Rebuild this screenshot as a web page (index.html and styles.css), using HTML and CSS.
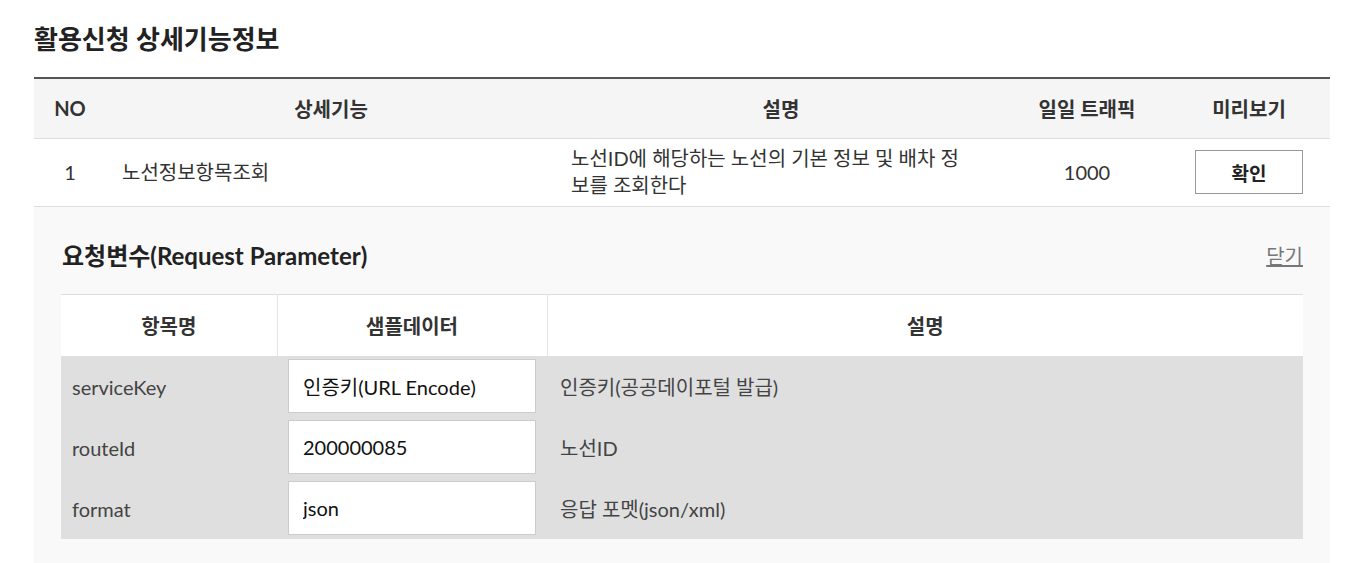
FILE: index.html
```html
<!DOCTYPE html>
<html lang="ko">
<head>
<meta charset="utf-8">
<link rel="stylesheet" href="styles.css">
</head>
<body>
<div class="page">
  <h2 class="title">활용신청 상세기능정보</h2>
  <table class="main">
    <colgroup>
      <col class="c-no"><col class="c-func"><col class="c-desc"><col class="c-traffic"><col class="c-preview">
    </colgroup>
    <thead>
      <tr><th>NO</th><th>상세기능</th><th>설명</th><th>일일 트래픽</th><th>미리보기</th></tr>
    </thead>
    <tbody>
      <tr class="row">
        <td class="center">1</td>
        <td class="left">노선정보항목조회</td>
        <td class="left desc"><div class="desc-text">노선ID에 해당하는 노선의 기본 정보 및 배차 정보를 조회한다</div></td>
        <td class="center">1000</td>
        <td class="center"><button class="btn">확인</button></td>
      </tr>
      <tr class="detail-row">
        <td colspan="5" class="detail">
          <div class="detail-head">
            <h3 class="sub-title">요청변수(Request Parameter)</h3>
            <a class="close" href="#">닫기</a>
          </div>
          <table class="params">
            <colgroup><col class="p-name"><col class="p-sample"><col class="p-desc"></colgroup>
            <thead><tr><th>항목명</th><th>샘플데이터</th><th>설명</th></tr></thead>
            <tbody>
              <tr><td class="pname">serviceKey</td><td class="psample"><input class="inp" type="text" value="인증키(URL Encode)"></td><td class="pdesc">인증키(공공데이포털 발급)</td></tr>
              <tr><td class="pname">routeId</td><td class="psample"><input class="inp" type="text" value="200000085"></td><td class="pdesc">노선ID</td></tr>
              <tr><td class="pname">format</td><td class="psample"><input class="inp" type="text" value="json"></td><td class="pdesc">응답 포멧(json/xml)</td></tr>
            </tbody>
          </table>
        </td>
      </tr>
    </tbody>
  </table>
</div>
</body>
</html>
```
FILE: styles.css
```css
* { box-sizing: border-box; }
html, body { margin: 0; padding: 0; background: #fff; }
body {
  font-family: Lato, "Noto Sans CJK KR", sans-serif;
  color: #333;
  font-size: 20px;
}
.page { padding: 24px 22px 0 34px; }
.title {
  margin: 0 0 23px 0;
  font-size: 26px;
  line-height: 30px;
  font-weight: 700;
  color: #222;
}
table { border-collapse: collapse; border-spacing: 0; }
.main { width: 1296px; table-layout: fixed; border-top: 2px solid #555; }
.c-no { width: 72px; }
.c-func { width: 450px; }
.c-desc { width: 450px; }
.c-traffic { width: 162px; }
.c-preview { width: 162px; }
.main > thead th {
  height: 60px;
  padding: 0;
  background: #f5f5f5;
  border-bottom: 1px solid #ddd;
  font-size: 20px;
  font-weight: 700;
  color: #333;
  text-align: center;
  vertical-align: middle;
}
.row td {
  height: 68px;
  padding: 0;
  border-bottom: 1px solid #ddd;
  vertical-align: middle;
  font-size: 20px;
  line-height: 27px;
  color: #333;
}
.center { text-align: center; }
.left { text-align: left; padding-left: 16px !important; }
.desc { padding-left: 15px !important; }
.desc-text { width: 398px; word-break: break-all; }
.btn {
  width: 108px;
  height: 44px;
  background: #fff;
  border: 1px solid #999;
  font-family: inherit;
  font-size: 19px;
  font-weight: 700;
  color: #222;
  cursor: pointer;
  padding: 0;
}
.detail {
  background: #f9f9f9;
  padding: 35px 27px 24px 27px;
}
.detail-head {
  display: flex;
  justify-content: space-between;
  align-items: center;
  margin-bottom: 24px;
}
.sub-title {
  margin: 0 0 0 1px;
  font-size: 24px;
  line-height: 28px;
  font-weight: 700;
  color: #222;
}
.close {
  font-size: 20px;
  color: #777;
  text-decoration: underline;
  line-height: 28px;
}
.params { width: 1242px; table-layout: fixed; border-top: 1px solid #ddd; }
.p-name { width: 216px; }
.p-sample { width: 270px; }
.p-desc { width: 756px; }
.params th {
  height: 62px;
  padding: 0;
  background: #fff;
  font-size: 20px;
  font-weight: 700;
  color: #333;
  text-align: center;
  border-left: 1px solid #e6e6e6;
}
.params th:first-child { border-left: none; }
.params td {
  height: 61px;
  background: #dfdfdf;
  font-size: 20px;
  color: #444;
  vertical-align: middle;
}
.pname { padding: 0 0 0 11px; }
.psample { padding: 3px 12px 4px 11px; }
.pdesc { padding: 0 0 0 13px; }
.inp {
  display: block;
  width: 248px;
  height: 54px;
  border: 1px solid #ccc;
  background: #fff;
  padding: 0 0 0 14px;
  font-family: inherit;
  font-size: 20px;
  color: #111;
  outline: none;
}
```
